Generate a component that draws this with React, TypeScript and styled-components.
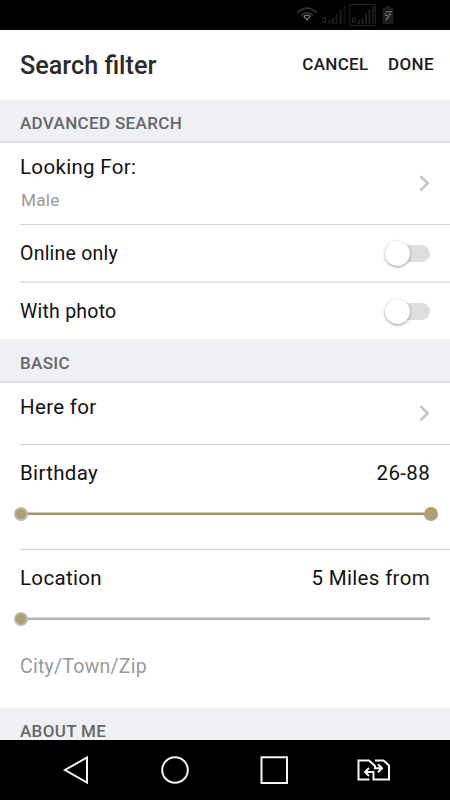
import React from "react";
import styled, { createGlobalStyle } from "styled-components";

const GlobalStyle = createGlobalStyle`
  * { box-sizing: border-box; }
  body { margin: 0; background: #fff; font-family: Roboto, "Liberation Sans", sans-serif; }
`;

const Screen = styled.div`
  width: 450px;
  height: 800px;
  display: flex;
  flex-direction: column;
  overflow: hidden;
  background: #fff;
  color: #111;
`;

const StatusBar = styled.div`
  height: 30px;
  flex: none;
  background: #000;
  display: flex;
  justify-content: flex-end;
  padding-right: 50px;
`;

const Header = styled.header`
  height: 70px;
  flex: none;
  display: flex;
  align-items: center;
  padding: 0 16px 0 20px;
`;

const Title = styled.h1`
  flex: 1;
  margin: 0;
  padding-top: 1px;
  font-size: 25.2px;
  line-height: 30px;
  font-weight: 470;
  color: #2b2b2b;
`;

const Action = styled.button`
  border: 0;
  padding: 0;
  margin: 0 0 2px 19.5px;
  background: none;
  font: 460 17px/20px Roboto, sans-serif;
  letter-spacing: 0.35px;
  color: #1c1c1c;
`;

const Content = styled.main`
  flex: 1;
  min-height: 0;
  overflow: hidden;
`;

const SectionTitle = styled.h2<{ $height: number; $top?: number }>`
  height: ${(p) => p.$height}px;
  margin: 0;
  padding: ${(p) => p.$top ?? 4}px 20px 0;
  background: #eff0f3;
  border-bottom: 2px solid #dfe1e3;
  display: flex;
  align-items: center;
  font-size: 17px;
  font-weight: 485;
  letter-spacing: 0.34px;
  color: #65676b;
`;

const Row = styled.div<{ $height: number; $top?: number; $line?: string; $align?: string }>`
  height: ${(p) => p.$height}px;
  margin-left: 20px;
  padding: ${(p) => p.$top ?? 0}px 20px 0 0;
  display: flex;
  justify-content: space-between;
  align-items: ${(p) => p.$align ?? "center"};
  border-bottom: ${(p) => p.$line ?? "none"};
`;

const Block = styled.div<{ $height: number; $line?: string }>`
  height: ${(p) => p.$height}px;
  margin-left: 20px;
  padding: 16px 20px 0 0;
  border-bottom: ${(p) => p.$line ?? "none"};
`;

const BlockHead = styled.div`
  display: flex;
  justify-content: space-between;
`;

const Label = styled.span<{ $compact?: boolean }>`
  padding-top: ${(p) => (p.$compact ? 2 : 0)}px;
  font-size: ${(p) => (p.$compact ? 19.5 : 20.5)}px;
  line-height: 24px;
  letter-spacing: ${(p) => (p.$compact ? 0.23 : 0.33)}px;
  white-space: nowrap;
`;

const Hint = styled.div<{ $size: number; $indent?: number; $gap: number }>`
  margin-top: ${(p) => p.$gap}px;
  padding-left: ${(p) => p.$indent ?? 0}px;
  font-size: ${(p) => p.$size}px;
  line-height: 24px;
  letter-spacing: 0.25px;
  color: #999;
`;

const Chevron = styled.svg<{ $top: number }>`
  margin-top: ${(p) => p.$top}px;
  flex: none;
`;

const Switch = styled.span`
  width: 43px;
  height: 17px;
  border-radius: 9px;
  background: linear-gradient(90deg, transparent 10px, #dedede 10px);
  display: flex;
  align-items: center;
`;

const Thumb = styled.span`
  width: 25px;
  height: 25px;
  flex: none;
  margin-left: -2px;
  border-radius: 50%;
  background: #fff;
  box-shadow: 0 1px 3px rgba(0, 0, 0, 0.42);
`;

const SliderTrack = styled.div<{ $active?: boolean }>`
  height: 3px;
  margin-top: 27px;
  display: flex;
  align-items: center;
  justify-content: space-between;
  background: ${(p) =>
    p.$active
      ? "linear-gradient(#cdc9b9 0 1px, #a3925f 1px 3px)"
      : "linear-gradient(#d6d6d6 0 1px, #b4b4b4 1px 3px)"};
`;

const Knob = styled.span<{ $edge: "start" | "end" }>`
  width: 14px;
  height: 14px;
  flex: none;
  margin: ${(p) => (p.$edge === "start" ? "0 0 0 -6px" : "0 -8px 0 0")};
  border-radius: 50%;
  background: #ad9f74;
  border: 2px solid ${(p) => (p.$edge === "start" ? "#b9b8b4" : "#ad9f74")};
`;

const NavBar = styled.nav`
  height: 60px;
  flex: none;
  background: #000;
`;

const ChevronIcon = ({ top }: { top: number }) => (
  <Chevron $top={top} width="11" height="17" viewBox="0 0 11 17" fill="none" stroke="#c5c5c9" strokeWidth="2.6">
    <path d="M1.500 1.200 8.700 8.300 1.500 15.400" />
  </Chevron>
);

const Toggle = () => (
  <Switch>
    <Thumb />
  </Switch>
);

export default function App() {
  return (
    <Screen>
      <GlobalStyle />
      <StatusBar>
        <svg width="110" height="30" viewBox="290 0 110 30" fill="none">
          <path d="M297.5 12.5Q307 4 316.500 12.500M301 15.500Q307 10 313 15.500" stroke="#303030" strokeWidth="2" />
          <path d="M304 16.300Q307 14 310 16.300L307 20Z" stroke="#777" strokeWidth="1.200" />
          <path d="M323 17.500h2.500v5H323z" stroke="#2b2b2b" />
          <path d="M329.500 24v-4M333 24v-6M336.500 24v-10M340.500 24v-14" stroke="#1e1e1e" strokeWidth="2" />
          <path d="M344.500 24V6" stroke="#131313" strokeWidth="2" />
          <path d="M350 4.500h25.500v21H350z" stroke="#222" />
          <path d="M352.500 18.500l2-1 1 2-1 3h-2z" stroke="#2d2d2d" />
          <path d="M359 24v-4M362.500 24v-6M366 24v-10M369.500 24v-15M373.300 24V6" stroke="#1e1e1e" strokeWidth="2" />
          <path d="M382.500 8h3V6h5v2h3v16h-11z" fill="#1c1c1c" />
          <path d="M391.500 11.500H386.500L385 15.500H388L386 20.500L391 14.500H388.500Z" stroke="#686868" strokeWidth="1" />
        </svg>
      </StatusBar>
      <Header>
        <Title>Search filter</Title>
        <Action>CANCEL</Action>
        <Action>DONE</Action>
      </Header>
      <Content>
        <SectionTitle $height={43}>ADVANCED SEARCH</SectionTitle>
        <Row $height={82} $top={12} $align="flex-start" $line="1px solid #d5d5d5">
          <div>
            <Label>Looking For:</Label>
            <Hint $size={17.2} $gap={9} $indent={1}>Male</Hint>
          </div>
          <ChevronIcon top={20} />
        </Row>
        <Row $height={58} $line="2px solid #e5e5e5">
          <Label $compact>Online only</Label>
          <Toggle />
        </Row>
        <Row $height={56}>
          <Label $compact>With photo</Label>
          <Toggle />
        </Row>
        <SectionTitle $height={44} $top={5}>BASIC</SectionTitle>
        <Row $height={62} $top={12} $align="flex-start" $line="1px solid #d5d5d5">
          <Label>Here for</Label>
          <ChevronIcon top={10} />
        </Row>
        <Block $height={105} $line="1px solid #d5d5d5">
          <BlockHead>
            <Label>Birthday</Label>
            <Label>26-88</Label>
          </BlockHead>
          <SliderTrack $active>
            <Knob $edge="start" />
            <Knob $edge="end" />
          </SliderTrack>
        </Block>
        <Block $height={158}>
          <BlockHead>
            <Label>Location</Label>
            <Label>5 Miles from</Label>
          </BlockHead>
          <SliderTrack>
            <Knob $edge="start" />
          </SliderTrack>
          <Hint $size={19.5} $gap={35}>City/Town/Zip</Hint>
        </Block>
        <SectionTitle $height={44}>ABOUT ME</SectionTitle>
      </Content>
      <NavBar>
        <svg width="450" height="60" viewBox="0 740 450 60" fill="none" stroke="#f5f5f5" strokeWidth="2">
          <path d="M87 757.500V782.500L65 770Z" />
          <circle cx="175" cy="770" r="12.800" />
          <path d="M261.500 757.200H287V783H261.500Z" />
          <path d="M369.500 779.500H358.500V760.500H369L375 766V768.300H381.500M378 764.300L382 768.300 378 772.300M375 760.500H383.500L389 765.500V779.500H373.500V772H366M369 768L365 772 369 776" />
        </svg>
      </NavBar>
    </Screen>
  );
}
